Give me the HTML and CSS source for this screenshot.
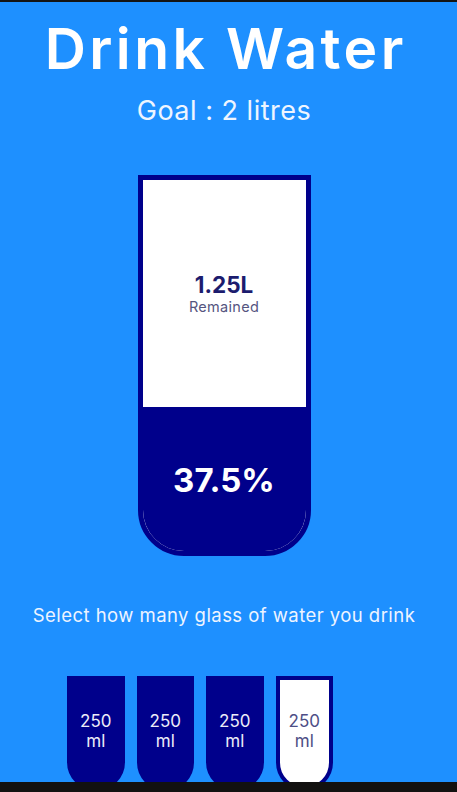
FILE: index.html
```html
<!DOCTYPE html>
<html lang="en">
<head>
<meta charset="UTF-8">
<title>Drink Water</title>
<link rel="stylesheet" href="styles.css">
</head>
<body>
  <div class="topbar"></div>
  <h1 class="title">Drink Water</h1>
  <h3 class="goal">Goal : 2 litres</h3>

  <div class="cup">
    <div class="remained">
      <span class="liters">1.25L</span>
      <small class="remained-label">Remained</small>
    </div>
    <div class="percentage">37.5%</div>
  </div>

  <p class="text">Select how many glass of water you drink</p>

  <div class="cups">
    <div class="cup-small full">250 ml</div>
    <div class="cup-small full">250 ml</div>
    <div class="cup-small full">250 ml</div>
    <div class="cup-small">250 ml</div>
  </div>

  <div class="player-bar"></div>
</body>
</html>
```
FILE: styles.css
```css
* { box-sizing: border-box; }

html, body {
  margin: 0;
  padding: 0;
}

body {
  background-color: #1e90ff;
  color: #ffffff;
  font-family: Inter, "Noto Sans", sans-serif;
  display: flex;
  flex-direction: column;
  align-items: center;
  height: 792px;
  overflow: hidden;
  padding-right: 9px;
}

.topbar {
  align-self: stretch;
  margin-right: -9px;
  height: 2px;
  background: #141414;
}

.title {
  margin: 14px 0 0;
  font-size: 57px;
  line-height: 66px;
  font-weight: 600;
  letter-spacing: 3.4px;
  margin-right: -3.4px;
}

.goal {
  margin: 13px 0 0;
  font-size: 27px;
  line-height: 32px;
  font-weight: 400;
  letter-spacing: 0.5px;
  color: #eef5ff;
}

.cup {
  margin-top: 48px;
  width: 173px;
  height: 381px;
  background: #ffffff;
  border: 5px solid #00008b;
  border-radius: 0 0 46px 46px;
  display: flex;
  flex-direction: column;
  overflow: hidden;
}

.remained {
  flex: 1;
  display: flex;
  flex-direction: column;
  align-items: center;
  justify-content: center;
  text-align: center;
  padding-top: 0;
}

.liters {
  font-size: 22.5px;
  line-height: 26px;
  font-weight: 700;
  color: #1c1c6e;
}

.remained-label {
  font-size: 14.5px;
  line-height: 17px;
  color: #55557f;
  letter-spacing: 0.3px;
}

.percentage {
  height: 144px;
  background: #00008b;
  color: #ffffff;
  display: flex;
  align-items: center;
  justify-content: center;
  font-size: 33px;
  font-weight: 700;
  padding-top: 2px;
}

.text {
  margin: 48px 0 0;
  font-size: 18.5px;
  line-height: 22px;
  letter-spacing: 0.45px;
  color: #eef4ff;
  text-align: center;
}

.cups {
  margin-top: 50px;
  width: 314px;
  display: flex;
  flex-wrap: wrap;
  justify-content: flex-start;
  gap: 12px;
}

.cup-small {
  width: 57.5px;
  height: 115px;
  border: 4px solid #00008b;
  border-radius: 0 0 29px 29px;
  background: #ffffff;
  color: #4e4e86;
  font-size: 17px;
  line-height: 20px;
  display: flex;
  align-items: center;
  justify-content: center;
  text-align: center;
  padding: 0 6px 6px;
}

.cup-small.full {
  background: #00008b;
  color: #ececf8;
}

.player-bar {
  position: fixed;
  left: 0;
  right: 0;
  bottom: 0;
  height: 10px;
  background: #121110;
}
```
